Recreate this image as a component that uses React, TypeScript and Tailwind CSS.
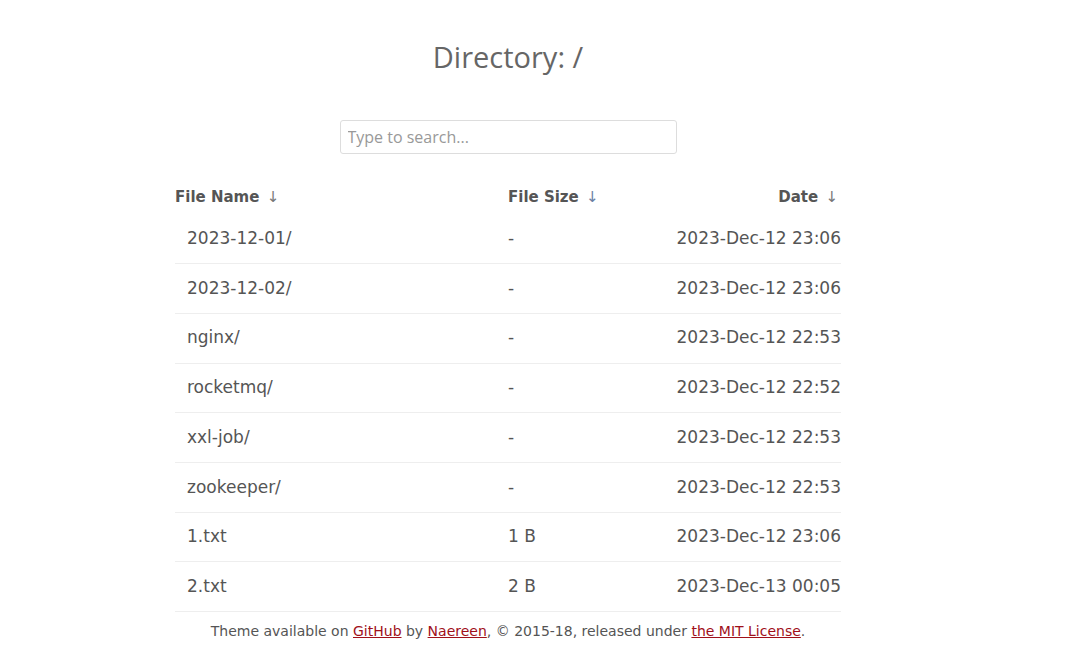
const rows = [
  { name: "2023-12-01/", size: "-", date: "2023-Dec-12 23:06" },
  { name: "2023-12-02/", size: "-", date: "2023-Dec-12 23:06" },
  { name: "nginx/", size: "-", date: "2023-Dec-12 22:53" },
  { name: "rocketmq/", size: "-", date: "2023-Dec-12 22:52" },
  { name: "xxl-job/", size: "-", date: "2023-Dec-12 22:53" },
  { name: "zookeeper/", size: "-", date: "2023-Dec-12 22:53" },
  { name: "1.txt", size: "1 B", date: "2023-Dec-12 23:06" },
  { name: "2.txt", size: "2 B", date: "2023-Dec-13 00:05" },
];

export default function App() {
  return (
    <div className="min-h-screen bg-white">
      <div className="w-[1016px] flex flex-col items-center font-['DejaVu_Sans',sans-serif] text-[#555]">
        <h1 className="mt-[36px] h-[42px] leading-[42px] text-[29px] text-[#666] font-['Open_Sans',sans-serif]">
          Directory: /
        </h1>
        <input
          className="mt-[42px] w-[337px] h-[34px] px-[7px] rounded-[3px] border border-[#ddd] text-[16px] font-['Open_Sans',sans-serif] text-[#555] placeholder:text-[#999] outline-none"
          placeholder="Type to search..."
        />
        <table className="mt-[26px] w-[666px] border-collapse">
          <thead>
            <tr className="h-[34px] text-[15px] font-bold text-[#555]">
              <th className="text-left pl-0 pt-[1px] w-[333px]">
                File Name <span className="ml-[2px] font-normal text-[#777]">↓</span>
              </th>
              <th className="text-left pt-[1px]">
                File Size <span className="ml-[2px] font-normal text-[#6b7fa3]">↓</span>
              </th>
              <th className="text-right pr-[3px] pt-[1px]">
                Date <span className="ml-[2px] font-normal text-[#777]">↓</span>
              </th>
            </tr>
          </thead>
          <tbody>
            {rows.map((r) => (
              <tr key={r.name} className="h-[49.7px] border-b border-[#eee] text-[17px] text-[#555]">
                <td className="pl-[12px]">{r.name}</td>
                <td>{r.size}</td>
                <td className="text-right">{r.date}</td>
              </tr>
            ))}
          </tbody>
        </table>
        <p className="mt-[9px] text-[14px] text-[#555]">
          Theme available on{" "}
          <a href="#" className="text-[#a0101a] underline">GitHub</a> by{" "}
          <a href="#" className="text-[#a0101a] underline">Naereen</a>, © 2015-18, released under{" "}
          <a href="#" className="text-[#a0101a] underline">the MIT License</a>.
        </p>
      </div>
    </div>
  );
}
